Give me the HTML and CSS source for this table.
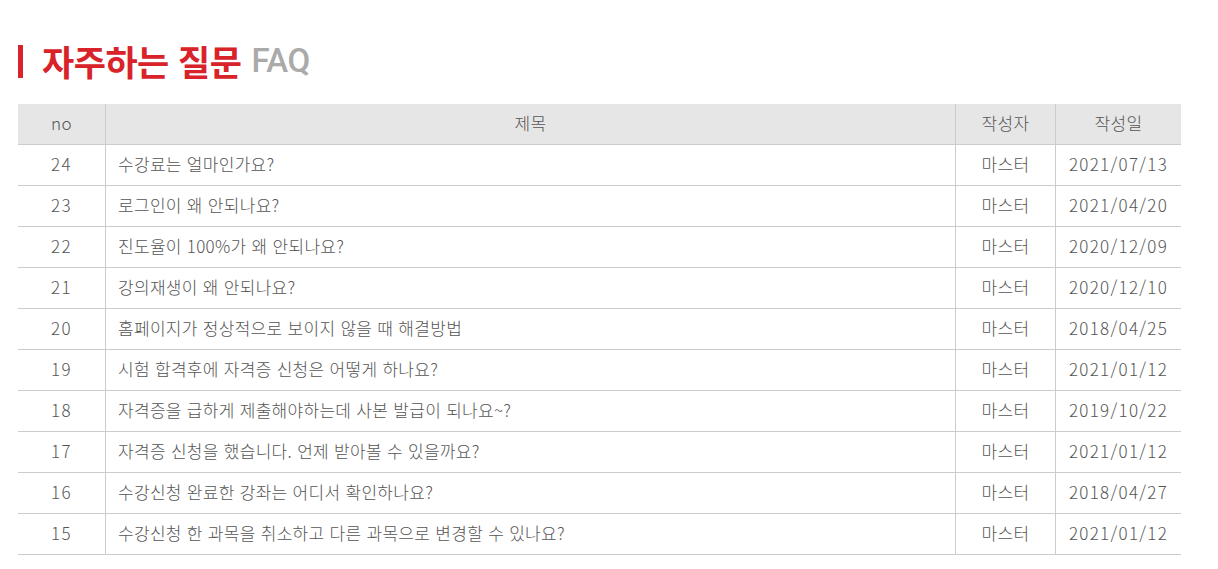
FILE: index.html
```html
<!DOCTYPE html>
<html lang="ko">
<head>
<meta charset="utf-8">
<link rel="stylesheet" href="styles.css">
</head>
<body>
<div class="wrap">
  <h2 class="title"><span class="bar"></span><span class="ko">자주하는 질문</span><span class="en">FAQ</span></h2>
  <table class="faq">
    <thead>
      <tr><th class="c-no">no</th><th class="c-title">제목</th><th class="c-writer">작성자</th><th class="c-date">작성일</th></tr>
    </thead>
    <tbody>
      <tr><td class="c-no">24</td><td class="c-title">수강료는 얼마인가요?</td><td>마스터</td><td class="c-date">2021/07/13</td></tr>
      <tr><td class="c-no">23</td><td class="c-title">로그인이 왜 안되나요?</td><td>마스터</td><td class="c-date">2021/04/20</td></tr>
      <tr><td class="c-no">22</td><td class="c-title">진도율이 100%가 왜 안되나요?</td><td>마스터</td><td class="c-date">2020/12/09</td></tr>
      <tr><td class="c-no">21</td><td class="c-title">강의재생이 왜 안되나요?</td><td>마스터</td><td class="c-date">2020/12/10</td></tr>
      <tr><td class="c-no">20</td><td class="c-title">홈페이지가 정상적으로 보이지 않을 때 해결방법</td><td>마스터</td><td class="c-date">2018/04/25</td></tr>
      <tr><td class="c-no">19</td><td class="c-title">시험 합격후에 자격증 신청은 어떻게 하나요?</td><td>마스터</td><td class="c-date">2021/01/12</td></tr>
      <tr><td class="c-no">18</td><td class="c-title">자격증을 급하게 제출해야하는데 사본 발급이 되나요~?</td><td>마스터</td><td class="c-date">2019/10/22</td></tr>
      <tr><td class="c-no">17</td><td class="c-title">자격증 신청을 했습니다. 언제 받아볼 수 있을까요?</td><td>마스터</td><td class="c-date">2021/01/12</td></tr>
      <tr><td class="c-no">16</td><td class="c-title">수강신청 완료한 강좌는 어디서 확인하나요?</td><td>마스터</td><td class="c-date">2018/04/27</td></tr>
      <tr><td class="c-no">15</td><td class="c-title">수강신청 한 과목을 취소하고 다른 과목으로 변경할 수 있나요?</td><td>마스터</td><td class="c-date">2021/01/12</td></tr>
    </tbody>
  </table>
</div>
</body>
</html>
```
FILE: styles.css
```css
html, body {
  margin: 0;
  padding: 0;
  background: #fff;
}
body {
  font-family: "Noto Sans CJK KR", "Noto Sans", sans-serif;
  color: #555;
}
.wrap {
  padding: 40px 0 0 18px;
  width: 1163px;
}
.title {
  display: flex;
  align-items: center;
  margin: 0;
  height: 42px;
  font-size: 35px;
  line-height: 42px;
  font-weight: 600;
  letter-spacing: -0.5px;
}
.bar {
  width: 5px;
  height: 33px;
  background: #d8232a;
  margin-right: 19px;
}
.ko {
  color: #d8232a;
}
.en {
  color: #aaa;
  margin-left: 10px;
  font-family: "Roboto", "Noto Sans", sans-serif;
  font-weight: 500;
  font-size: 33px;
}
.faq {
  margin-top: 22px;
  width: 1163px;
  border-collapse: collapse;
  table-layout: fixed;
  font-size: 17px;
}
.faq th, .faq td {
  height: 38px;
  padding: 0 0 2px;
  line-height: 20px;
  text-align: center;
  font-weight: 300;
  color: #555;
  border-bottom: 1px solid #ccc;
  border-left: 1px solid #ccc;
  white-space: nowrap;
  letter-spacing: 0.3px;
}
.faq th:first-child, .faq td:first-child {
  border-left: none;
}
.faq thead th {
  background: #e6e6e6;
}
.faq .c-no { width: 87px; }
.faq .c-writer { width: 99px; }
.faq .c-date { width: 125px; }
.faq td.c-date, .faq td.c-no {
  letter-spacing: 1.3px;
}
.faq td.c-title {
  text-align: left;
  padding-left: 12px;
}
```
